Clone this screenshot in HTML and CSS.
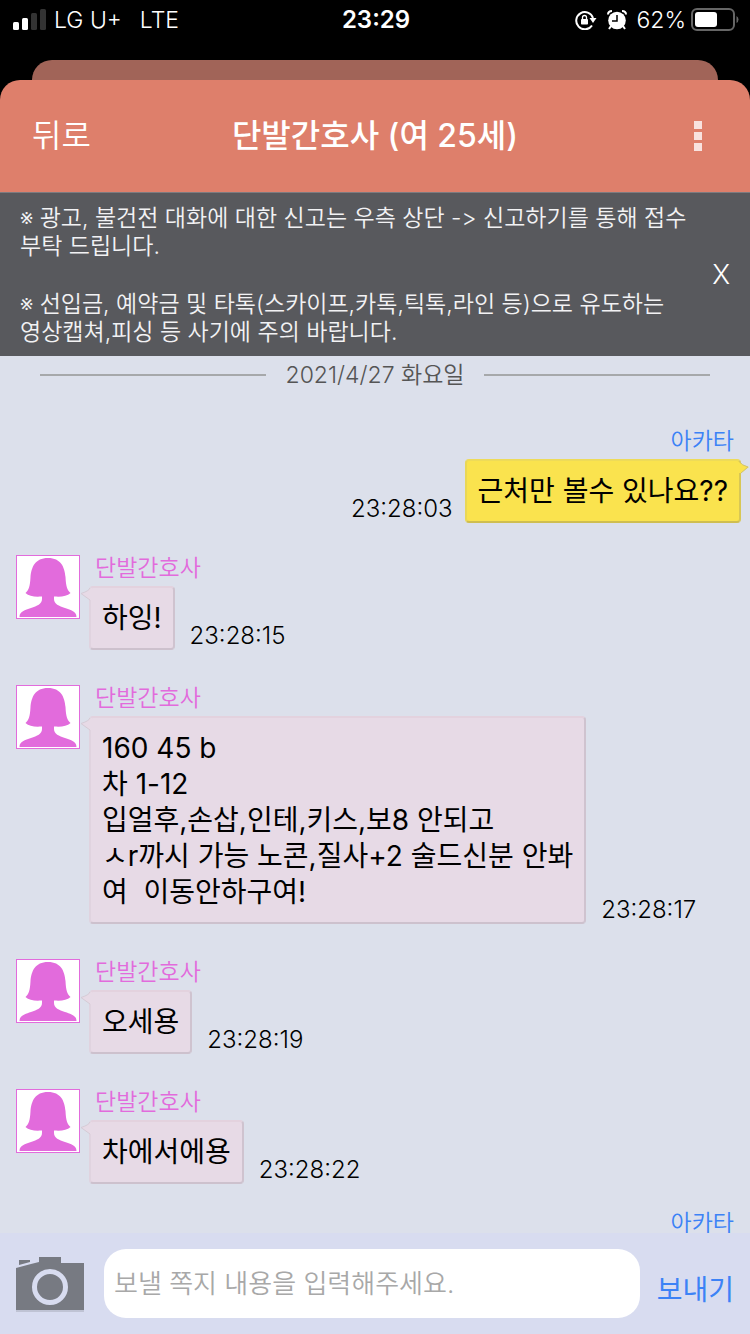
FILE: index.html
```
<!DOCTYPE html>
<html lang="ko">
<head>
    <meta charset="UTF-8">
    <meta name="viewport" content="width=device-width, initial-scale=1.0">
    <title>단발간호사</title>
    <link rel="stylesheet" href="styles.css">
</head>
<body>
    <svg class="defs" width="0" height="0" aria-hidden="true">
        <symbol id="avatar" viewBox="0 0 62 62">
            <path fill="#e26bdc" d="M31 2C44 2 47.500 11 48.500 21C49 30 50 34 53.500 37C50 40.500 44 41 37 40.500V43C37 48 42 50 48 52C54 54 59.500 55.500 59.500 61H2.500C2.500 55.500 8 54 14 52C20 50 25 48 25 43V40.500C18 41 12 40.500 8.500 37C12 34 13 30 13.500 21C14.500 11 18 2 31 2Z"/>
        </symbol>
        <symbol id="tail-pink" viewBox="0 0 12 14">
            <path fill="#e7dae6" d="M12 1H10Q9 4 1 6.500L10 13H12Z"/>
            <path d="M10 1Q9 4 1 6.500L10 13" fill="none" stroke="#d5cbd5"/>
        </symbol>
        <symbol id="tail-yellow" viewBox="0 0 12 14">
            <path fill="#fae34e" d="M0 2H2Q3 4 12 7L4 13H0Z"/>
            <path d="M3 2Q4 5 11 7L4 13" fill="none" stroke="#d0c173"/>
        </symbol>
    </svg>

    <div class="status-bar">
        <div class="status-left">
            <svg width="33" height="22" viewBox="0 0 33 22">
                <rect x="0" y="13" width="6" height="8" rx="1.500" fill="#fff"/>
                <rect x="9" y="9" width="6" height="12" rx="1.500" fill="#fff"/>
                <rect x="18" y="4" width="6" height="17" rx="1.500" fill="#333"/>
                <rect x="27" y="0" width="6" height="21" rx="1.500" fill="#333"/>
            </svg>
            <span>LG U+</span>
            <span class="network">LTE</span>
        </div>
        <div class="status-time">23:29</div>
        <div class="status-right">
            <svg class="lock" width="22" height="20" viewBox="0 0 22 20">
                <path d="M17 15.500A8.600 8.600 0 1 1 18 8" fill="none" stroke="#fff" stroke-width="2"/>
                <path d="M14.500 8H21.500L18 13Z" fill="#fff"/>
                <rect x="6" y="9" width="7" height="5.500" rx=".8" fill="#fff"/>
                <path d="M7.500 9V7.500a2 2 0 0 1 4 0V9" fill="none" stroke="#fff" stroke-width="1.300"/>
            </svg>
            <svg class="alarm" width="20" height="20" viewBox="0 0 20 20">
                <path d="M1 4.500Q1 1 5 1M19 4.500Q19 1 15 1" stroke="#fff" stroke-width="2" fill="none"/>
                <path d="M4 16L2 19M16 16L18 19" stroke="#fff" stroke-width="2"/>
                <circle cx="10" cy="10.500" r="8.800" fill="#fff"/>
                <path d="M10 5V11H5" fill="none" stroke="#000" stroke-width="1.500"/>
            </svg>
            <span>62%</span>
            <svg class="battery" width="48" height="24" viewBox="0 0 48 24">
                <rect x="1" y="1" width="42" height="21" rx="5" fill="none" stroke="#666" stroke-width="2"/>
                <rect x="4" y="4" width="22" height="15" rx="3" fill="#fff"/>
                <path d="M45.500 8V15Q47.500 14 47.500 11.500T45.500 8Z" fill="#666"/>
            </svg>
        </div>
    </div>

    <div class="back-card"></div>

    <header class="header">
        <button type="button" class="back-btn">뒤로</button>
        <h1>단발간호사 (여 25세)</h1>
        <button type="button" class="menu-btn" aria-label="메뉴">
            <svg width="8" height="30" viewBox="0 0 8 30">
                <path fill="#f8e2df" d="M0 0h8v8H0zM0 11h8v8H0zM0 22h8v8H0z"/>
            </svg>
        </button>
    </header>

    <section class="notice">
        <div class="notice-text">
            <p>※ 광고, 불건전 대화에 대한 신고는 우측 상단 -&gt; 신고하기를 통해 접수<br>부탁 드립니다.</p>
            <p>※ 선입금, 예약금 및 타톡(스카이프,카톡,틱톡,라인 등)으로 유도하는<br>영상캡쳐,피싱 등 사기에 주의 바랍니다.</p>
        </div>
        <button type="button" class="close-btn">X</button>
    </section>

    <main class="chat">
        <div class="date">2021/4/27 화요일</div>

        <div class="message sent">
            <div class="name">아카타</div>
            <div class="row">
                <time>23:28:03</time>
                <div class="bubble">근처만 볼수 있나요??<svg class="tail"><use href="#tail-yellow"/></svg></div>
            </div>
        </div>

        <div class="message received">
            <svg class="avatar"><use href="#avatar"/></svg>
            <div class="content">
                <div class="name">단발간호사</div>
                <div class="row">
                    <div class="bubble">하잉!<svg class="tail"><use href="#tail-pink"/></svg></div>
                    <time>23:28:15</time>
                </div>
            </div>
        </div>

        <div class="message received">
            <svg class="avatar"><use href="#avatar"/></svg>
            <div class="content">
                <div class="name">단발간호사</div>
                <div class="row">
                    <div class="bubble">160 45 b
차 1-12
입얼후,손삽,인테,키스,보8 안되고
ㅅr까시 가능 노콘,질사+2 술드신분 안봐
여  이동안하구여!<svg class="tail"><use href="#tail-pink"/></svg></div>
                    <time>23:28:17</time>
                </div>
            </div>
        </div>

        <div class="message received">
            <svg class="avatar"><use href="#avatar"/></svg>
            <div class="content">
                <div class="name">단발간호사</div>
                <div class="row">
                    <div class="bubble">오세용<svg class="tail"><use href="#tail-pink"/></svg></div>
                    <time>23:28:19</time>
                </div>
            </div>
        </div>

        <div class="message received">
            <svg class="avatar"><use href="#avatar"/></svg>
            <div class="content">
                <div class="name">단발간호사</div>
                <div class="row">
                    <div class="bubble">차에서에용<svg class="tail"><use href="#tail-pink"/></svg></div>
                    <time>23:28:22</time>
                </div>
            </div>
        </div>

        <div class="message sent">
            <div class="name">아카타</div>
        </div>
    </main>

    <form class="composer">
        <button type="button" class="camera-btn" aria-label="사진">
            <svg width="68" height="56" viewBox="0 0 68 56">
                <path fill="#777a82" d="M0 12L15 8L23 6V1H45V7H68V54H0ZM3 4H14V6L3 9Z"/>
                <path fill="#bfc3d4" d="M0 54h68v2H0z"/>
                <circle cx="34" cy="31" r="15.500" fill="none" stroke="#d8dcf0" stroke-width="5"/>
            </svg>
        </button>
        <input type="text" class="message-input" aria-label="쪽지 내용" placeholder="보낼 쪽지 내용을 입력해주세요." autocomplete="off">
        <button type="submit" class="send-btn">보내기</button>
    </form>
</body>
</html>
```
FILE: styles.css
```
* {
    box-sizing: border-box;
}
body {
    margin: 0;
    height: 100vh;
    display: flex;
    flex-direction: column;
    overflow: hidden;
    background-color: #000;
    font-family: Inter, "Noto Sans CJK KR", sans-serif;
    font-weight: 350;
    color: #000;
}
button {
    padding: 0;
    border: none;
    background: none;
    font-family: inherit;
    font-weight: 350;
    cursor: pointer;
}
svg {
    display: block;
}
.defs {
    position: absolute;
}

/* status bar */
.status-bar {
    flex: none;
    display: grid;
    grid-template-columns: 1fr auto 1fr;
    align-items: center;
    height: 60px;
    padding: 0 11px 20px 13px;
    color: #fff;
    font-size: 23px;
    line-height: 40px;
}
.status-left,
.status-right {
    display: flex;
    align-items: center;
}
.status-left {
    gap: 8px;
}
.status-left .network {
    margin-left: 10px;
}
.status-time {
    font-size: 24px;
    font-weight: 600;
}
.status-right {
    justify-content: flex-end;
}
.lock {
    margin-right: 10px;
}
.alarm {
    margin-right: 9px;
}
.battery {
    margin-left: 5px;
}

/* header */
.back-card {
    flex: none;
    height: 40px;
    margin: 0 32px -20px;
    border-radius: 20px 20px 0 0;
    background-color: #a16458;
}
.header {
    flex: none;
    position: relative;
    display: grid;
    grid-template-columns: 1fr auto 1fr;
    align-items: center;
    height: 112px;
    padding: 0 32px;
    border-radius: 20px 20px 0 0;
    background-color: #de7f6b;
    color: #fff;
}
.header h1 {
    margin: 0;
    font-size: 32px;
    font-weight: 500;
    line-height: 48px;
}
.back-btn {
    justify-self: start;
    color: #fff;
    font-size: 32px;
    line-height: 48px;
}
.menu-btn {
    justify-self: end;
    padding: 0 16px;
}

/* notice */
.notice {
    flex: none;
    display: flex;
    align-items: center;
    justify-content: space-between;
    height: 164px;
    padding: 0 20px;
    border-top: 1px solid #7d7b80;
    background-color: #58595d;
    color: #f2f2f4;
    font-size: 23px;
    line-height: 28px;
}
.notice p {
    margin: 0 0 30px;
}
.notice p:last-child {
    margin-bottom: 0;
}
.close-btn {
    color: #fff;
    font-size: 27px;
    font-weight: 300;
    line-height: 36px;
}

/* chat */
.chat {
    flex: 1;
    min-height: 0;
    overflow: hidden;
    background-color: #dce0eb;
}
.date {
    display: flex;
    align-items: center;
    gap: 20px;
    margin-bottom: 34px;
    padding: 0 40px;
    color: #555;
    font-size: 23px;
    line-height: 38px;
}
.date::before,
.date::after {
    content: "";
    flex: 1;
    height: 2px;
    background-color: #a6a8aa;
}
.message {
    margin-top: 35px;
}
.name {
    margin-bottom: 5px;
    font-size: 23px;
    line-height: 26px;
}
.row {
    display: flex;
    align-items: flex-end;
}
.bubble {
    position: relative;
    border: 2px solid;
    border-radius: 4px;
    padding: 12px 11px;
    font-size: 28px;
    font-weight: 400;
    line-height: 36px;
    white-space: pre;
}
.message time {
    font-size: 24px;
    font-weight: 300;
    line-height: 28px;
}
.tail {
    position: absolute;
    top: -1px;
    width: 12px;
    height: 14px;
}
.received {
    display: flex;
    gap: 9px;
    padding-left: 16px;
}
.sent + .received {
    margin-top: 32px;
}
.avatar {
    flex: none;
    width: 64px;
    height: 64px;
    border: 1px solid #e26bdc;
    background-color: #fff;
}
.received .name {
    padding-left: 6px;
    color: #e26bdc;
}
.received .row {
    gap: 15px;
}
.received .bubble {
    border-color: #e3d2de #cfc3cf #cdc1cd #e0d3df;
    background-color: #e7dae6;
}
.received .tail {
    left: -11px;
}
.sent {
    margin-top: 26px;
    padding-right: 9px;
}
.sent .name {
    padding-right: 7px;
    color: #3c82f6;
    text-align: right;
}
.sent .row {
    justify-content: flex-end;
    gap: 12px;
}
.sent .bubble {
    border-color: #eedb59 #d8c755 #cfbe50 #e9d757;
    background-color: #fae34e;
}
.sent .tail {
    right: -10px;
}

/* composer */
.composer {
    flex: none;
    display: flex;
    align-items: center;
    padding: 16px;
    background-color: #d8dcf0;
}
.camera-btn {
    margin-right: 20px;
}
.message-input {
    flex: 1;
    min-width: 0;
    height: 69px;
    padding: 0 10px;
    border: none;
    border-radius: 22px;
    background-color: #fff;
    font-family: inherit;
    font-size: 26px;
    font-weight: 350;
}
.message-input::placeholder {
    color: #a8a8a8;
}
.send-btn {
    margin-left: 17px;
    padding-top: 12px;
    color: #3c82f6;
    font-size: 28px;
    font-weight: 400;
    line-height: 36px;
}
```
